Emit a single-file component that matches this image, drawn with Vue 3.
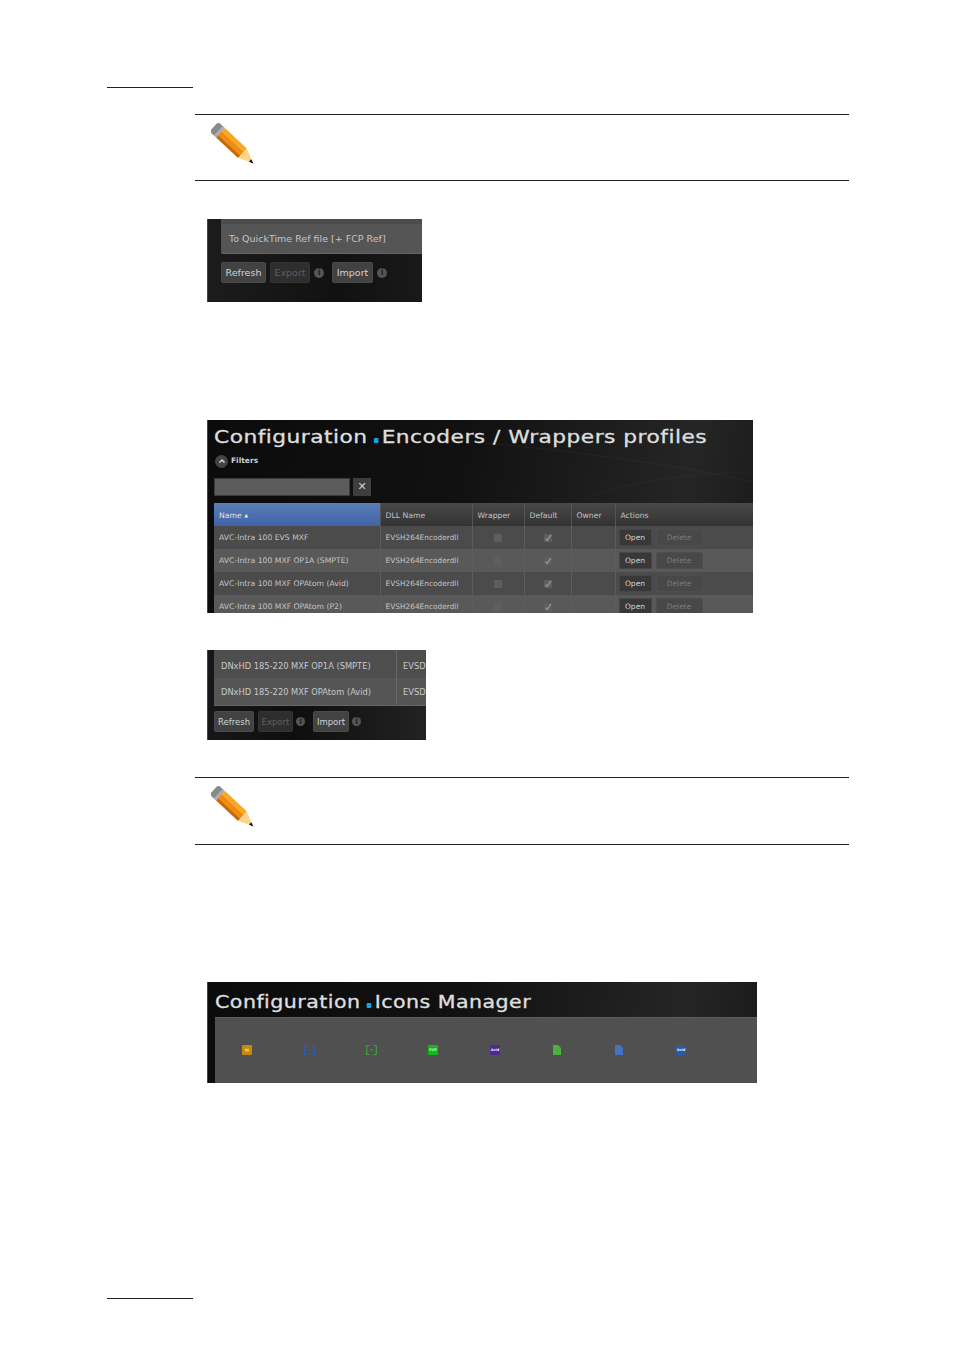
<template>
  <div class="page">
    <div class="rule-short"></div>

    <div class="note note-first">
      <svg class="pencil" width="46" height="44" viewBox="0 0 46 44">
        <g transform="translate(4 4) rotate(43)">
          <rect x="-1" y="-6" width="9" height="13" rx="3" fill="#8a8a8a" />
          <rect x="5" y="-6" width="3" height="13" fill="#b0b0b0" />
          <rect x="8" y="-6" width="30" height="4.5" fill="#f9a825" />
          <rect x="8" y="-1.5" width="30" height="5" fill="#f08c0c" />
          <rect x="8" y="3.5" width="30" height="3.5" fill="#c96a08" />
          <polygon points="38,-6 52,0.5 38,7" fill="#fbd48a" />
          <polygon points="48.5,-1.2 53,0.5 48.5,2.2" fill="#111" />
        </g>
      </svg>
    </div>

    <div class="shot shot-small">
      <div class="grey-row"><span>To QuickTime Ref file [+ FCP Ref]</span></div>
      <div class="btn-row btn-row-a">
        <button class="btn">Refresh</button>
        <button class="btn off">Export</button>
        <i class="info">i</i>
        <button class="btn import">Import</button>
        <i class="info">i</i>
      </div>
    </div>

    <div class="shot shot-profiles">
      <svg class="swoosh" width="300" height="83" viewBox="0 0 300 83">
        <path d="M0 20C90 28 200 40 300 62" fill="none" stroke="#fff" stroke-opacity=".035" />
        <path d="M120 83C170 62 230 54 300 52" fill="none" stroke="#fff" stroke-opacity=".03" />
      </svg>
      <h1 class="title">Configuration<b></b>Encoders / Wrappers profiles</h1>
      <div class="filters">
        <span class="chevron">
          <svg width="8" height="6" viewBox="0 0 8 6"><path d="M1.5 4.5 4 2l2.5 2.5" fill="none" stroke="#ddd" stroke-width="1.4" /></svg>
        </span>
        Filters
      </div>
      <div class="search">
        <div class="search-box"></div>
        <div class="search-x">✕</div>
      </div>
      <table class="grid">
        <colgroup>
          <col style="width: 166px" />
          <col style="width: 92px" />
          <col style="width: 52px" />
          <col style="width: 47px" />
          <col style="width: 44px" />
          <col />
        </colgroup>
        <thead>
          <tr>
            <th class="sorted">Name <em>▲</em></th>
            <th>DLL Name</th>
            <th>Wrapper</th>
            <th>Default</th>
            <th>Owner</th>
            <th>Actions</th>
          </tr>
        </thead>
        <tbody>
          <tr v-for="row in profiles" :key="row">
            <td>{{ row }}</td>
            <td class="dll">EVSH264Encoderdll</td>
            <td class="mid"><span class="check"></span></td>
            <td class="mid">
              <span class="check">
                <svg width="8" height="8" viewBox="0 0 8 8"><path d="M1.5 4.5 3.2 6.5 6.8 1" fill="none" stroke="#909090" stroke-width="1.5" /></svg>
              </span>
            </td>
            <td></td>
            <td class="actions">
              <button class="mini">Open</button>
              <button class="mini off">Delete</button>
            </td>
          </tr>
        </tbody>
      </table>
    </div>

    <div class="shot shot-dnx">
      <div class="dnx-table">
        <div v-for="row in dnxRows" :key="row" class="dnx-row">
          <span class="dnx-name">{{ row }}</span>
          <span class="dnx-dll">EVSD</span>
        </div>
      </div>
      <div class="btn-row btn-row-b">
        <button class="btn">Refresh</button>
        <button class="btn off">Export</button>
        <i class="info">i</i>
        <button class="btn import">Import</button>
        <i class="info">i</i>
      </div>
    </div>

    <div class="note note-second">
      <svg class="pencil" width="46" height="44" viewBox="0 0 46 44">
        <g transform="translate(4 4) rotate(43)">
          <rect x="-1" y="-6" width="9" height="13" rx="3" fill="#8a8a8a" />
          <rect x="5" y="-6" width="3" height="13" fill="#b0b0b0" />
          <rect x="8" y="-6" width="30" height="4.5" fill="#f9a825" />
          <rect x="8" y="-1.5" width="30" height="5" fill="#f08c0c" />
          <rect x="8" y="3.5" width="30" height="3.5" fill="#c96a08" />
          <polygon points="38,-6 52,0.5 38,7" fill="#fbd48a" />
          <polygon points="48.5,-1.2 53,0.5 48.5,2.2" fill="#111" />
        </g>
      </svg>
    </div>

    <div class="shot shot-icons">
      <h1 class="title title-icons">Configuration<b></b>Icons Manager</h1>
      <div class="icon-panel">
        <div class="icon-cell"><span class="tile amber">▮▮</span></div>
        <div class="icon-cell">
          <svg width="11" height="10" viewBox="0 0 11 10">
            <path d="M3.5.5H.7v9h2.8M7.5.5h2.8v9H7.5M4 5h3" fill="none" stroke="#2f5cb0" stroke-width="1.2" />
          </svg>
        </div>
        <div class="icon-cell">
          <svg width="11" height="10" viewBox="0 0 11 10">
            <path d="M3.5.5H.7v9h2.8M7.5.5h2.8v9H7.5M4 5h3" fill="none" stroke="#3fa03a" stroke-width="1.2" />
          </svg>
        </div>
        <div class="icon-cell"><span class="tile fcp">FCP</span></div>
        <div class="icon-cell"><span class="tile purple">Avid</span></div>
        <div class="icon-cell">
          <svg width="8" height="10" viewBox="0 0 8 10"><path d="M0 0h5l3 3v7H0z" fill="#4caf3f" /></svg>
        </div>
        <div class="icon-cell">
          <svg width="8" height="10" viewBox="0 0 8 10"><path d="M0 0h5l3 3v7H0z" fill="#4472c4" /></svg>
        </div>
        <div class="icon-cell"><span class="tile navy">Avid</span></div>
      </div>
    </div>

    <div class="rule-short rule-foot"></div>
  </div>
</template>

<script setup>
const profiles = [
  'AVC-Intra 100 EVS MXF',
  'AVC-Intra 100 MXF OP1A (SMPTE)',
  'AVC-Intra 100 MXF OPAtom (Avid)',
  'AVC-Intra 100 MXF OPAtom (P2)'
]

const dnxRows = ['DNxHD 185-220 MXF OP1A (SMPTE)', 'DNxHD 185-220 MXF OPAtom (Avid)']
</script>

<style>
body {
  background: #fff;
}
</style>

<style scoped>
.page {
  height: 1350px;
  padding-top: 87px;
  box-sizing: border-box;
  overflow: hidden;
  font-family: "DejaVu Sans", sans-serif;
}

.rule-short {
  width: 86px;
  height: 1px;
  margin-left: 107px;
  background: #222;
}

.rule-foot {
  margin-top: 215px;
}

.note {
  width: 654px;
  margin-left: 195px;
  border-top: 1px solid #222;
  border-bottom: 1px solid #222;
  box-sizing: border-box;
}

.note-first {
  height: 67px;
  margin-top: 26px;
}

.note-second {
  height: 68px;
  margin-top: 37px;
}

.pencil {
  display: block;
  margin: 8px 0 0 16px;
}

.shot {
  position: relative;
  margin-left: 207px;
  overflow: hidden;
  color: #c8c8c8;
  background: linear-gradient(100deg, #0b0b0b 0%, #111 45%, #252525 85%, #1a1a1a 100%);
  box-shadow: inset 1px 0 0 #444;
}

.swoosh {
  position: absolute;
  top: 0;
  right: 0;
}

.shot-small {
  width: 215px;
  height: 83px;
  margin-top: 38px;
  padding-left: 14px;
  box-sizing: border-box;
  background: linear-gradient(90deg, #1c1c1c, #111 60%, #191919);
}

.grey-row {
  height: 35px;
  padding: 5px 0 0 8px;
  box-sizing: border-box;
  border-bottom: 1px solid #666;
  background: linear-gradient(#4c4c4c 5px, #555 5px);
  border-radius: 0 0 0 2px;
  font-size: 9.5px;
  line-height: 29px;
  color: #c4c4c4;
}

.btn-row {
  display: flex;
  align-items: center;
}

.btn-row-a {
  gap: 4px;
  margin-top: 8px;
}

.btn-row-a .btn {
  height: 21px;
  padding: 0;
  font-size: 9.5px;
}

.btn-row-a .btn:nth-child(1) {
  width: 45px;
}

.btn-row-a .btn:nth-child(2) {
  width: 40px;
}

.btn-row-a .import {
  width: 41px;
  margin-left: 4px;
}

.btn {
  border: 1px solid #4a4a4a;
  border-radius: 2px;
  background: #424242;
  color: #d2d2d2;
  font-family: inherit;
}

.btn.off {
  background: #2e2e2e;
  border-color: #333;
  color: #5f5f5f;
}

.info {
  display: block;
  width: 10px;
  height: 10px;
  border-radius: 50%;
  background: #555;
  color: #222;
  font: 700 8px/10px "DejaVu Sans", sans-serif;
  text-align: center;
}

.shot-profiles {
  width: 546px;
  height: 193px;
  margin-top: 118px;
  padding-left: 7px;
  box-sizing: border-box;
}

.title {
  position: relative;
  margin: 0;
  padding-top: 6px;
  font: 400 18.5px/22px "DejaVu Sans", sans-serif;
  letter-spacing: 0.4px;
  color: #dedede;
  white-space: nowrap;
  transform: scaleX(1.175);
  transform-origin: left center;
  -webkit-text-stroke: 0.35px #dedede;
}

.title b {
  display: inline-block;
  width: 4px;
  height: 5px;
  margin: 0 3px 0 5px;
  border-radius: 1px;
  background: #12a5e0;
}

.filters {
  display: flex;
  align-items: center;
  gap: 3px;
  height: 14px;
  margin: 6px 0 0 1px;
  font: 700 7.5px/14px "DejaVu Sans", sans-serif;
  color: #cfcfcf;
}

.chevron {
  display: flex;
  align-items: center;
  justify-content: center;
  width: 13px;
  height: 13px;
  border-radius: 50%;
  background: #444;
}

.search {
  display: flex;
  gap: 3px;
  margin-top: 10px;
  height: 18px;
}

.search-box {
  width: 136px;
  background: #5c5c5c;
  border: 1px solid #3a3a3a;
  box-sizing: border-box;
}

.search-x {
  width: 18px;
  background: #3e3e3e;
  color: #cfcfcf;
  font-size: 11px;
  line-height: 18px;
  text-align: center;
}

.grid {
  width: 539px;
  margin-top: 7px;
  border-collapse: collapse;
  table-layout: fixed;
  font-size: 7.7px;
}

.grid th {
  height: 23px;
  padding: 2px 0 0 5px;
  box-sizing: border-box;
  text-align: left;
  font-weight: 400;
  color: #c4c4c4;
  border-right: 1px solid #555;
  background: linear-gradient(#484848, #333);
}

.grid th.sorted {
  background: linear-gradient(#5b7db8, #3f63a6);
  color: #e4e4e4;
}

.grid th:last-child {
  border-right: 0;
}

.grid th em {
  font-style: normal;
  font-size: 5px;
  vertical-align: 1px;
}

.grid td {
  height: 23px;
  padding: 0 0 0 5px;
  border-right: 1px solid #5c5c5c;
  color: #c4c4c4;
  white-space: nowrap;
  overflow: hidden;
}

.grid td.dll {
  font-size: 7.4px;
}

.grid td:last-child {
  border-right: 0;
}

.grid tbody tr:nth-child(odd) {
  background: #4b4b4b;
}

.grid tbody tr:nth-child(even) {
  background: #595959;
}

.grid td.mid {
  padding: 0;
  text-align: center;
}

.check {
  display: inline-block;
  width: 8px;
  height: 8px;
  background: #5e5e5e;
  vertical-align: middle;
}

.check svg {
  display: block;
}

.grid td.actions {
  padding-left: 3px;
}

.mini {
  height: 17px;
  padding: 0;
  border: 1px solid #474747;
  border-radius: 1px;
  background: #383838;
  color: #d6d6d6;
  font: 7.5px "DejaVu Sans", sans-serif;
  vertical-align: middle;
}

.mini:first-child {
  width: 33px;
  margin-right: 4px;
}

.mini.off {
  width: 47px;
  background: #484848;
  border-color: #4e4e4e;
  color: #7c7c7c;
}

.shot-dnx {
  width: 219px;
  height: 90px;
  margin-top: 37px;
  padding-left: 7px;
  box-sizing: border-box;
  background: linear-gradient(90deg, #171717, #0e0e0e 40%, #222);
}

.dnx-table {
  border-bottom: 1px solid #666;
}

.dnx-row {
  display: flex;
  height: 27px;
  font-size: 8.3px;
  line-height: 29px;
  white-space: nowrap;
  overflow: hidden;
  background: #555;
}

.dnx-row:first-child {
  height: 28px;
  background: #4e4e4e;
  line-height: 32px;
}

.dnx-name {
  flex: 0 0 183px;
  box-sizing: border-box;
  padding-left: 7px;
  border-right: 1px solid #666;
  color: #c8c8c8;
}

.dnx-dll {
  padding-left: 6px;
  color: #c8c8c8;
}

.btn-row-b {
  gap: 4px;
  margin-top: 5px;
}

.btn-row-b .btn {
  height: 21px;
  padding: 0;
  font-size: 8.5px;
}

.btn-row-b .btn:nth-child(1) {
  width: 40px;
}

.btn-row-b .btn:nth-child(2) {
  width: 35px;
}

.btn-row-b .info {
  width: 9px;
  height: 9px;
  margin-left: -1px;
  line-height: 9px;
}

.btn-row-b .import {
  width: 36px;
  margin-left: 4px;
}

.shot-icons {
  width: 550px;
  height: 101px;
  margin-top: 137px;
  padding-left: 8px;
  box-sizing: border-box;
}

.title-icons {
  height: 35px;
  padding-top: 9px;
  box-sizing: border-box;
  font-size: 17.5px;
}

.icon-panel {
  display: grid;
  grid-template-columns: repeat(8, 62px);
  align-items: center;
  height: 66px;
  padding: 0 0 2px 1px;
  box-sizing: border-box;
  background: #505050;
  border-top: 1px solid #5e5e5e;
}

.icon-cell {
  display: flex;
  justify-content: center;
  align-items: center;
}

.tile {
  display: block;
  width: 10px;
  height: 10px;
  border-radius: 1px;
  font: 700 3.5px/10px "DejaVu Sans", sans-serif;
  color: #e8e8e8;
  text-align: center;
  overflow: hidden;
}

.amber {
  background: #c58a10;
  color: #f0d79c;
}

.fcp {
  background: #12b81a;
}

.purple {
  background: #4b2a96;
}

.navy {
  background: #2a5aa8;
}
</style>
